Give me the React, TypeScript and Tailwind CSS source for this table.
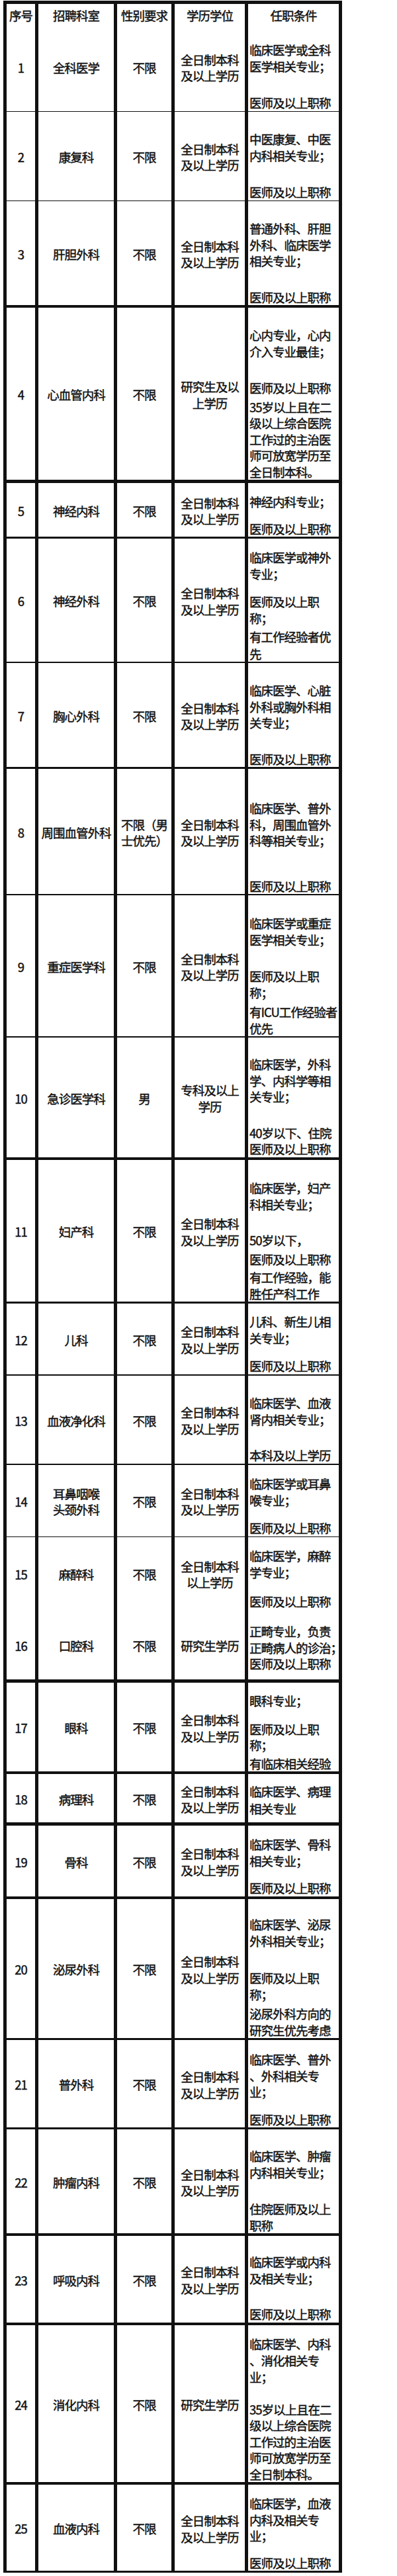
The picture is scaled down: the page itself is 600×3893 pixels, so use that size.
import React from "react";

type Line = [string, string];
type Row = {
  n: string;
  dept: string[];
  sex: string[];
  edu: string[];
  h: string;
  req: Line[];
};

const QR = ["全日制本科", "及以上学历"];

const rows: Row[] = [
  { n: "1", dept: ["全科医学"], sex: ["不限"], edu: QR, h: "h-[130px]", req: [["临床医学或全科", "mt-[29px]"], ["医学相关专业；", ""], ["医师及以上职称", "mt-[31px]"]] },
  { n: "2", dept: ["康复科"], sex: ["不限"], edu: QR, h: "h-[130px]", req: [["中医康复、中医", "mt-[29px]"], ["内科相关专业；", ""], ["医师及以上职称", "mt-[31px]"]] },
  { n: "3", dept: ["肝胆外科"], sex: ["不限"], edu: QR, h: "h-[156px]", req: [["普通外科、肝胆", "mt-[29px]"], ["外科、临床医学", ""], ["相关专业；", ""], ["医师及以上职称", "mt-[30px]"]] },
  { n: "4", dept: ["心血管内科"], sex: ["不限"], edu: ["研究生及以", "上学历"], h: "h-[260px]", req: [["心内专业，心内", "mt-[29px]"], ["介入专业最佳；", ""], ["医师及以上职称", "mt-[31px]"], ["35岁以上且在二", "mt-[4px]"], ["级以上综合医院", ""], ["工作过的主治医", ""], ["师可放宽学历至", ""], ["全日制本科。", ""]] },
  { n: "5", dept: ["神经内科"], sex: ["不限"], edu: QR, h: "h-[79px]", req: [["神经内科专业；", "mt-[16px]"], ["医师及以上职称", "mt-[16px]"]] },
  { n: "6", dept: ["神经外科"], sex: ["不限"], edu: QR, h: "h-[183px]", req: [["临床医学或神外", "mt-[16px]"], ["专业；", ""], ["医师及以上职", "mt-[18px]"], ["称；", ""], ["有工作经验者优", "mt-[4px]"], ["先", "mt-[1px]"]] },
  { n: "7", dept: ["胸心外科"], sex: ["不限"], edu: QR, h: "h-[155px]", req: [["临床医学、心脏", "mt-[29px]"], ["外科或胸外科相", ""], ["关专业；", ""], ["医师及以上职称", "mt-[30px]"]] },
  { n: "8", dept: ["周围血管外科"], sex: ["不限（男", "士优先）"], edu: QR, h: "h-[186px]", req: [["临床医学、普外", "mt-[47px]"], ["科，周围血管外", ""], ["科等相关专业；", ""], ["医师及以上职称", "mt-[44px]"]] },
  { n: "9", dept: ["重症医学科"], sex: ["不限"], edu: QR, h: "h-[210px]", req: [["临床医学或重症", "mt-[30px]"], ["医学相关专业；", ""], ["医师及以上职", "mt-[31px]"], ["称；", ""], ["有ICU工作经验者", "mt-[5px]"], ["优先", ""]] },
  { n: "10", dept: ["急诊医学科"], sex: ["男"], edu: ["专科及以上", "学历"], h: "h-[180px]", req: [["临床医学，外科", "mt-[28px]"], ["学、内科学等相", ""], ["关专业；", ""], ["40岁以下、住院", "mt-[30px]"], ["医师及以上职称", ""]] },
  { n: "11", dept: ["妇产科"], sex: ["不限"], edu: QR, h: "h-[212px]", req: [["临床医学，妇产", "mt-[30px]"], ["科相关专业；", ""], ["50岁以下，", "mt-[30px]"], ["医师及以上职称", "mt-[4px]"], ["有工作经验，能", "mt-[3px]"], ["胜任产科工作", ""]] },
  { n: "12", dept: ["儿科"], sex: ["不限"], edu: QR, h: "h-[104px]", req: [["儿科、新生儿相", "mt-[15px]"], ["关专业；", ""], ["医师及以上职称", "mt-[18px]"]] },
  { n: "13", dept: ["血液净化科"], sex: ["不限"], edu: QR, h: "h-[130px]", req: [["临床医学、血液", "mt-[29px]"], ["肾内相关专业；", ""], ["本科及以上学历", "mt-[30px]"]] },
  { n: "14", dept: ["耳鼻咽喉", "头颈外科"], sex: ["不限"], edu: QR, h: "h-[104px]", req: [["临床医学或耳鼻", "mt-[16px]"], ["喉专业；", ""], ["医师及以上职称", "mt-[18px]"]] },
  { n: "15", dept: ["麻醉科"], sex: ["不限"], edu: ["全日制本科", "以上学历"], h: "h-[105px]", req: [["临床医学，麻醉", "mt-[16px]"], ["学专业；", ""], ["医师及以上职称", "mt-[20px]"]] },
  { n: "16", dept: ["口腔科"], sex: ["不限"], edu: ["研究生学历"], h: "h-[105px]", req: [["正畸专业，负责", "mt-[20px]"], ["正畸病人的诊治；", ""], ["医师及以上职称", ""]] },
  { n: "17", dept: ["眼科"], sex: ["不限"], edu: QR, h: "h-[133px]", req: [["眼科专业；", "mt-[15px]"], ["医师及以上职", "mt-[18px]"], ["称；", ""], ["有临床相关经验", "mt-[3px]"]] },
  { n: "18", dept: ["病理科"], sex: ["不限"], edu: QR, h: "h-[73px]", req: [["临床医学、病理", "mt-[14px]"], ["相关专业", "mt-[1px]"]] },
  { n: "19", dept: ["骨科"], sex: ["不限"], edu: QR, h: "h-[106px]", req: [["临床医学、骨科", "mt-[16px]"], ["相关专业；", ""], ["医师及以上职称", "mt-[17px]"]] },
  { n: "20", dept: ["泌尿外科"], sex: ["不限"], edu: QR, h: "h-[208px]", req: [["临床医学、泌尿", "mt-[26px]"], ["外科相关专业；", ""], ["医师及以上职", "mt-[32px]"], ["称；", ""], ["泌尿外科方向的", "mt-[5px]"], ["研究生优先考虑", ""]] },
  { n: "21", dept: ["普外科"], sex: ["不限"], edu: QR, h: "h-[130px]", req: [["临床医学、普外", "mt-[17px]"], ["、外科相关专", ""], ["业；", ""], ["医师及以上职称", "mt-[17px]"]] },
  { n: "22", dept: ["肿瘤内科"], sex: ["不限"], edu: QR, h: "h-[156px]", req: [["临床医学、肿瘤", "mt-[28px]"], ["内科相关专业；", ""], ["住院医师及以上", "mt-[31px]"], ["职称", ""]] },
  { n: "23", dept: ["呼吸内科"], sex: ["不限"], edu: QR, h: "h-[130px]", req: [["临床医学或内科", "mt-[27px]"], ["及相关专业；", ""], ["医师及以上职称", "mt-[30px]"]] },
  { n: "24", dept: ["消化内科"], sex: ["不限"], edu: ["研究生学历"], h: "h-[236px]", req: [["临床医学、内科", "mt-[16px]"], ["、消化相关专", ""], ["业；", "mt-[1px]"], ["35岁以上且在二", "mt-[24px]"], ["级以上综合医院", ""], ["工作过的主治医", ""], ["师可放宽学历至", ""], ["全日制本科。", ""]] },
  { n: "25", dept: ["血液内科"], sex: ["不限"], edu: QR, h: "h-[128px]", req: [["临床医学，血液", "mt-[16px]"], ["内科及相关专", ""], ["业；", ""], ["医师及以上职称", "mt-[16px]"]] },
];

const GRID = "grid grid-cols-[43px_114px_82px_106px_137px] gap-x-[5px]";
const TXT =
  "text-[18.5px] tracking-[-1px] leading-[24.5px] whitespace-nowrap [-webkit-text-stroke:0.45px_#111]";

function Center({ lines }: { lines: string[] }) {
  return (
    <div className="flex items-center justify-center bg-white pt-[3px] text-center">
      <div className="flex flex-col items-center">
        {lines.map((l, i) => (
          <div key={i} className={TXT}>
            {l}
          </div>
        ))}
      </div>
    </div>
  );
}

export default function App() {
  return (
    <div className="min-h-[3893px] w-[600px] bg-white pt-[1px] font-['Noto_Sans_CJK_SC',sans-serif] text-[#111]">
      <div className="ml-[5px] flex w-[512px] flex-col gap-y-[5px] bg-[#111] p-[5px]">
        <div className={`${GRID} h-[23px]`}>
          {["序号", "招聘科室", "性别要求", "学历学位", "任职条件"].map((t) => (
            <div key={t} className="flex items-center justify-center overflow-visible bg-white pt-[5px]">
              <span className={TXT}>{t}</span>
            </div>
          ))}
        </div>
        {rows.map((r) => (
          <div key={r.n} className={`${GRID} ${r.h}`}>
            <Center lines={[r.n]} />
            <Center lines={r.dept} />
            <Center lines={r.sex} />
            <Center lines={r.edu} />
            <div className="flex flex-col bg-white pl-[2px]">
              {r.req.map(([t, mt], i) => (
                <div key={i} className={`${TXT} ${mt}`}>
                  {t}
                </div>
              ))}
            </div>
          </div>
        ))}
      </div>
    </div>
  );
}
